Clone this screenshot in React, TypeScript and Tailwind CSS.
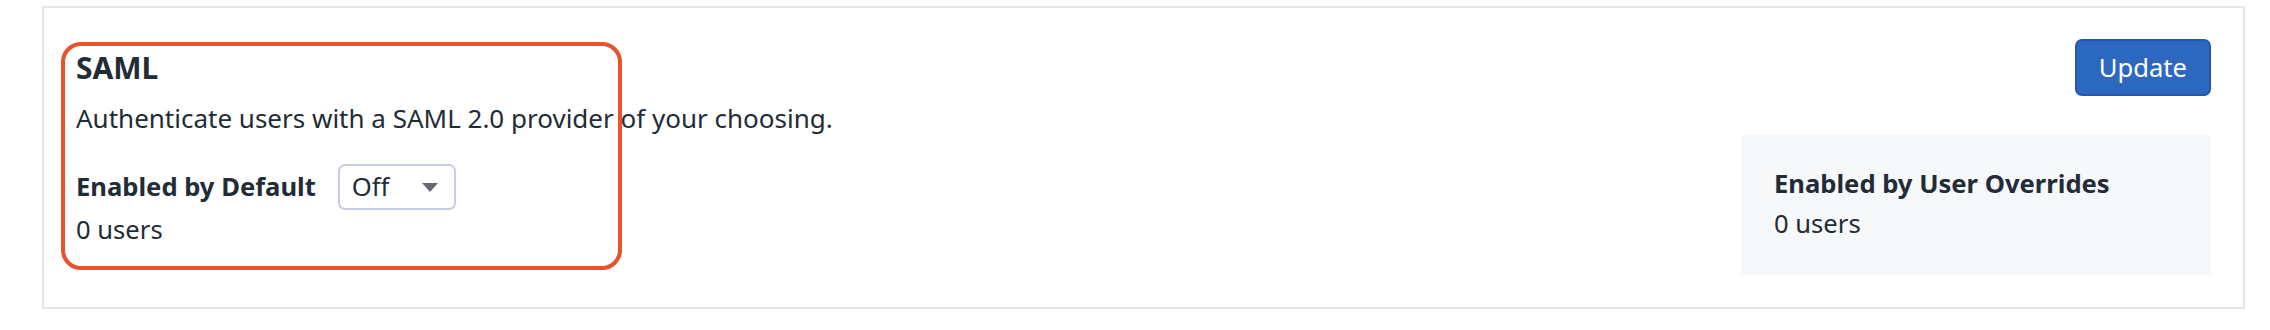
import React from "react";

export default function App() {
  return (
    <div
      className="w-[2270px] h-[330px] bg-white pt-[6px] pl-[42px] pr-[25px]"
      style={{ fontFamily: '"Noto Sans", "Open Sans", sans-serif' }}
    >
      <div className="relative flex border-2 border-[#e3e6ea] px-[32px] pt-[31px] pb-[32px] text-[#222c37]">
        <div className="flex-1 flex flex-col">
          <h2 className="mt-[9px] text-[30px] leading-[40px] font-bold">SAML</h2>
          <p className="mt-[10px] text-[26px] leading-[40px]">
            Authenticate users with a SAML 2.0 provider of your choosing.
          </p>
          <div className="mt-[26px] flex items-center h-[46px]">
            <span className="text-[25.6px] leading-[40px] font-bold">Enabled by Default</span>
            <div className="ml-[22px] flex items-center justify-between w-[118px] h-[46px] border-2 border-[#c9cde0] rounded-[7px] pl-[12px] pr-[16px]">
              <span className="text-[25.6px] leading-[40px]">Off</span>
              <svg width="16" height="9" viewBox="0 0 16 9">
                <path d="M0 0 H16 L8 9 Z" fill="#666a70" />
              </svg>
            </div>
          </div>
          <p className="text-[25.6px] leading-[40px]">0 users</p>
        </div>
        <div className="w-[470px] flex flex-col items-end">
          <button className="h-[57px] px-[22px] bg-[#2d68c0] border-2 border-[#2457ae] rounded-[7px] text-white text-[25.6px] leading-[40px]">
            Update
          </button>
          <div className="mt-[39px] w-full bg-[#f7f8fa] pl-[33px] pt-[29px] pb-[31px]">
            <p className="text-[25.6px] leading-[40px] font-bold">Enabled by User Overrides</p>
            <p className="text-[25.6px] leading-[40px]">0 users</p>
          </div>
        </div>
        <div className="absolute left-[17px] top-[34px] w-[561px] h-[228px] border-[4px] border-[#e8532f] rounded-[20px] pointer-events-none" />
      </div>
    </div>
  );
}
